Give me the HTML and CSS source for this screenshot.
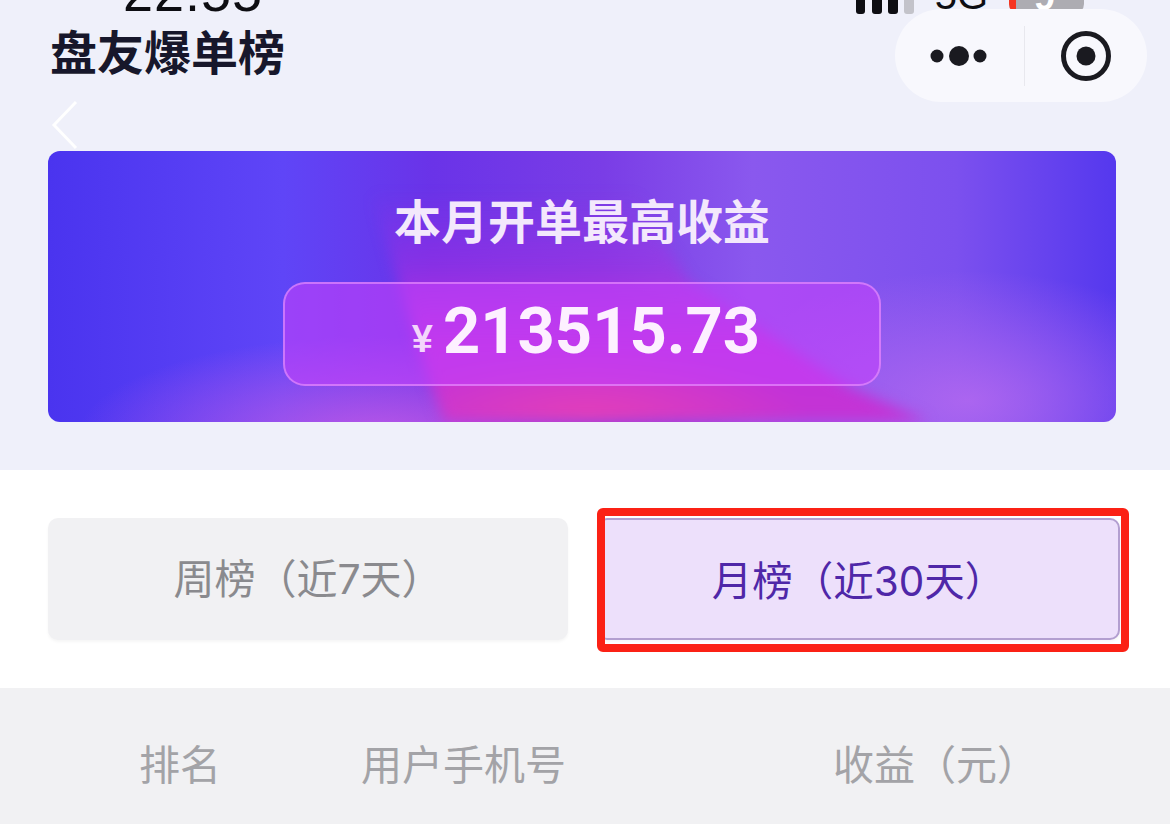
FILE: index.html
```html
<!DOCTYPE html>
<html lang="zh-CN">
<head>
  <meta charset="utf-8">
  <title>盘友爆单榜</title>
  <link rel="stylesheet" href="styles.css">
</head>
<body>
  <div class="top">
    <div class="status">
      <span class="time">22:55</span>
      <div class="status-right">
        <svg class="signal" width="58" height="14" viewBox="0 0 58 14">
          <rect x="0" y="-4" width="9" height="18" rx="3" fill="#0d0d12"/>
          <rect x="16" y="-4" width="10" height="18" rx="3" fill="#0d0d12"/>
          <rect x="32" y="-4" width="10" height="18" rx="3" fill="#0d0d12"/>
          <rect x="48" y="-4" width="10" height="18" rx="3" fill="#c3c3ca"/>
        </svg>
        <span class="net">5G</span>
        <div class="battery"><span class="battery-red"></span><span class="battery-num">9</span></div>
      </div>
    </div>

    <div class="capsule">
      <svg class="dots" width="58" height="22" viewBox="0 0 58 22">
        <circle cx="7" cy="11" r="6.5" fill="#1a1a20"/>
        <circle cx="29" cy="11" r="10" fill="#1a1a20"/>
        <circle cx="50" cy="11" r="6.5" fill="#1a1a20"/>
      </svg>
      <span class="capsule-line"></span>
      <svg class="target" width="52" height="52" viewBox="0 0 52 52">
        <circle cx="26" cy="26" r="22.5" fill="none" stroke="#1a1a20" stroke-width="5"/>
        <circle cx="26" cy="26" r="9.5" fill="#1a1a20"/>
      </svg>
    </div>

    <h1 class="title">盘友爆单榜</h1>
    <svg class="back" width="30" height="52" viewBox="0 0 30 52">
      <path d="M26 2 L4 25 L26 48" fill="none" stroke="#fff" stroke-width="3"/>
    </svg>

    <div class="banner">
      <div class="banner-glow"></div>
      <div class="banner-title">本月开单最高收益</div>
      <div class="amount-box">
        <span class="yen">¥</span><span class="amount">213515.73</span>
      </div>
    </div>
  </div>

  <div class="tabs">
    <div class="tab">周榜（近7天）</div>
    <div class="tab tab-active">月榜（近30天）<span class="marker"></span></div>
  </div>

  <div class="thead">
    <span class="col-rank">排名</span>
    <span class="col-phone">用户手机号</span>
    <span class="col-income">收益（元）</span>
  </div>
</body>
</html>
```

FILE: styles.css
```css
html, body {
  margin: 0;
  height: 824px;
  overflow: hidden;
  background: #fff;
  font-family: "Liberation Sans", "Noto Sans CJK SC", sans-serif;
}

/* top area */

.top {
  position: relative;
  height: 470px;
  box-sizing: border-box;
  padding: 0 54px 0 48px;
  background: #eff0fa;
}

.status {
  display: flex;
  justify-content: space-between;
  height: 14px;
  overflow: hidden;
  align-items: flex-end;
  padding-left: 75px;
}

.time {
  font-size: 54px;
  line-height: 54px;
  margin-bottom: -5px;
  color: #0d0d12;
  letter-spacing: 1px;
}

.status-right {
  display: flex;
  align-items: flex-end;
  gap: 21px;
  padding-right: 32px;
}

.signal {
  display: block;
}

.net {
  font-size: 40px;
  line-height: 40px;
  margin-bottom: -1px;
  color: #0d0d12;
}

.battery {
  position: relative;
  width: 75px;
  height: 16px;
  overflow: hidden;
  background: #adacb2;
  border-radius: 0 0 10px 10px;
}

.battery-red {
  display: block;
  width: 7px;
  height: 16px;
  background: #f5341f;
}

.battery-num {
  position: absolute;
  left: 25px;
  bottom: -2px;
  font-size: 38px;
  line-height: 38px;
  font-weight: bold;
  color: #fff;
}

.capsule {
  position: absolute;
  left: 895px;
  top: 9px;
  width: 252px;
  height: 93px;
  box-sizing: border-box;
  padding: 0 35px 0 35px;
  display: flex;
  align-items: center;
  justify-content: space-between;
  background: #f8f8fd;
  border-radius: 47px;
}

.capsule-line {
  width: 1px;
  height: 60px;
  background: #e8e8ee;
  margin-left: 1px;
}

.title {
  margin: 12px 0 0 2px;
  font-size: 47px;
  line-height: 56px;
  font-weight: bold;
  color: #17172b;
  letter-spacing: 0;
}

.back {
  display: block;
  margin: 18px 0 -1px 2px;
}

/* banner */

.banner {
  position: relative;
  overflow: hidden;
  width: 1068px;
  height: 271px;
  box-sizing: border-box;
  padding-top: 40px;
  border-radius: 12px;
  display: flex;
  flex-direction: column;
  align-items: center;
  background:
    radial-gradient(ellipse 300px 100px at 330px 285px, rgba(195, 90, 230, .9), transparent),
    radial-gradient(ellipse 260px 130px at 920px 250px, rgba(180, 105, 240, .85), transparent),
    linear-gradient(90deg, #4a34ef 0%, #5f45f7 22%, #6a33e8 36%, #7a3de6 52%, #8a58ee 66%, #7c50ee 85%, #5538ee 100%);
}

.banner-glow {
  position: absolute;
  inset: 0;
  filter: blur(7px);
}

.banner-glow::before {
  content: "";
  position: absolute;
  inset: 0;
  clip-path: polygon(320px 30px, 570px 10px, 640px 130px, 800px 235px, 900px 280px, 400px 280px, 378px 220px);
  background:
    radial-gradient(ellipse 220px 70px at 540px 268px, #e43fb8, transparent),
    linear-gradient(180deg, rgba(160, 45, 225, 0) 15%, rgba(170, 45, 225, .45) 42%, #c22fdc 72%, #c434d4 100%);
}

.banner-title {
  position: relative;
  font-family: "Noto Sans CJK SC", sans-serif;
  font-size: 47px;
  line-height: 56px;
  font-weight: bold;
  color: #f3e8fc;
}

.amount-box {
  position: relative;
  margin-top: 35px;
  width: 598px;
  height: 104px;
  box-sizing: border-box;
  padding-left: 8px;
  display: flex;
  align-items: center;
  justify-content: center;
  border: 2px solid rgba(240, 160, 255, .55);
  border-radius: 22px;
  background: rgba(195, 65, 250, .6);
  color: #fdf0ff;
}

.yen {
  font-size: 38px;
  margin: 10px 10px 0 0;
  font-weight: bold;
  color: #f3d6fb;
}

.amount {
  font-family: Roboto, "Liberation Sans", sans-serif;
  font-size: 65px;
  line-height: 66px;
  font-weight: bold;
  margin-bottom: 6px;
}

/* tabs */

.tabs {
  height: 218px;
  box-sizing: border-box;
  padding: 48px 50px 0 48px;
  display: flex;
  gap: 29px;
  background: #fff;
}

.tab {
  position: relative;
  flex: 0 0 520px;
  height: 122px;
  box-sizing: border-box;
  padding-bottom: 6px;
  display: flex;
  align-items: center;
  justify-content: center;
  background: #f1f1f3;
  border-radius: 10px;
  font-family: Inter, "Noto Sans CJK SC", sans-serif;
  font-size: 41px;
  color: #8a8a8e;
  box-shadow: 0 2px 3px rgba(0, 0, 0, .04);
}

.tab-active {
  flex-basis: 523px;
  padding-bottom: 2px;
  background: #ede0fb;
  border: 2px solid #b39fd0;
  color: #4f27a8;
  font-size: 40.5px;
}

.marker {
  position: absolute;
  left: -2px;
  right: -11px;
  top: -12px;
  bottom: -14px;
  border: 8px solid #fb2115;
  border-radius: 6px;
}

/* table header */

.thead {
  height: 136px;
  display: flex;
  align-items: center;
  padding-top: 12px;
  box-sizing: border-box;
  background: #f1f1f3;
  font-size: 41px;
  color: #a3a3a7;
}

.col-rank {
  margin-left: 139px;
  width: 222px;
}

.col-phone {
  width: 472px;
}
```
